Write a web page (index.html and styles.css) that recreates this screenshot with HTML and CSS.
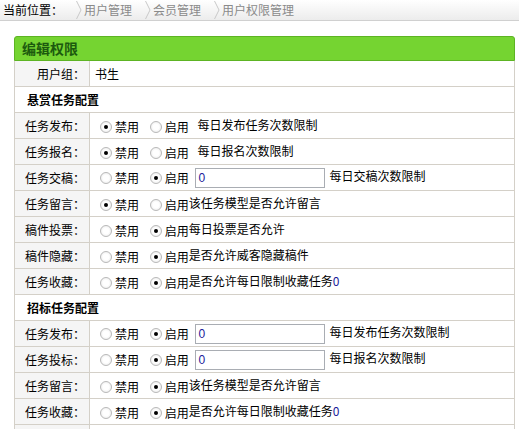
FILE: index.html
```html
<!DOCTYPE html>
<html lang="zh-CN">
<head>
    <meta charset="UTF-8">
    <title>编辑权限</title>
    <link rel="stylesheet" href="styles.css">
</head>
<body>

    <div class="crumbs">
        <span class="crumb-title">当前位置：</span>
        <span class="sep"><svg width="6" height="20" viewBox="0 0 6 20"><polyline points="0.5,1 5,10 0.5,19" fill="none" stroke="#c8c8c8" stroke-width="1"/></svg></span>
        <span class="crumb">用户管理</span>
        <span class="sep"><svg width="6" height="20" viewBox="0 0 6 20"><polyline points="0.5,1 5,10 0.5,19" fill="none" stroke="#c8c8c8" stroke-width="1"/></svg></span>
        <span class="crumb">会员管理</span>
        <span class="sep"><svg width="6" height="20" viewBox="0 0 6 20"><polyline points="0.5,1 5,10 0.5,19" fill="none" stroke="#c8c8c8" stroke-width="1"/></svg></span>
        <span class="crumb">用户权限管理</span>
    </div>

    <div class="panel">
        <div class="panel-head">编辑权限</div>
        <table class="form-table">
            <tr>
                <th>用户组：</th>
                <td>书生</td>
            </tr>
            <tr class="section">
                <td colspan="2">悬赏任务配置</td>
            </tr>
            <tr>
                <th>任务发布：</th>
                <td>
                    <label><input type="radio" name="r1" checked>禁用</label>
                    <label><input type="radio" name="r1">启用</label>
                    <span class="tip">每日发布任务次数限制</span>
                </td>
            </tr>
            <tr>
                <th>任务报名：</th>
                <td>
                    <label><input type="radio" name="r2" checked>禁用</label>
                    <label><input type="radio" name="r2">启用</label>
                    <span class="tip">每日报名次数限制</span>
                </td>
            </tr>
            <tr>
                <th>任务交稿：</th>
                <td>
                    <label><input type="radio" name="r3">禁用</label>
                    <label><input type="radio" name="r3" checked>启用</label>
                    <input type="text" class="txt" value="0">每日交稿次数限制
                </td>
            </tr>
            <tr>
                <th>任务留言：</th>
                <td>
                    <label><input type="radio" name="r4" checked>禁用</label>
                    <label class="tight"><input type="radio" name="r4">启用</label>该任务模型是否允许留言
                </td>
            </tr>
            <tr>
                <th>稿件投票：</th>
                <td>
                    <label><input type="radio" name="r5">禁用</label>
                    <label class="tight"><input type="radio" name="r5" checked>启用</label>每日投票是否允许
                </td>
            </tr>
            <tr>
                <th>稿件隐藏：</th>
                <td>
                    <label><input type="radio" name="r6">禁用</label>
                    <label class="tight"><input type="radio" name="r6" checked>启用</label>是否允许威客隐藏稿件
                </td>
            </tr>
            <tr>
                <th>任务收藏：</th>
                <td>
                    <label><input type="radio" name="r7">禁用</label>
                    <label class="tight"><input type="radio" name="r7" checked>启用</label>是否允许每日限制收藏任务<span class="num">0</span>
                </td>
            </tr>
            <tr class="section">
                <td colspan="2">招标任务配置</td>
            </tr>
            <tr>
                <th>任务发布：</th>
                <td>
                    <label><input type="radio" name="z1">禁用</label>
                    <label><input type="radio" name="z1" checked>启用</label>
                    <input type="text" class="txt" value="0">每日发布任务次数限制
                </td>
            </tr>
            <tr>
                <th>任务投标：</th>
                <td>
                    <label><input type="radio" name="z2">禁用</label>
                    <label><input type="radio" name="z2" checked>启用</label>
                    <input type="text" class="txt" value="0">每日报名次数限制
                </td>
            </tr>
            <tr>
                <th>任务留言：</th>
                <td>
                    <label><input type="radio" name="z3">禁用</label>
                    <label class="tight"><input type="radio" name="z3" checked>启用</label>该任务模型是否允许留言
                </td>
            </tr>
            <tr>
                <th>任务收藏：</th>
                <td>
                    <label><input type="radio" name="z4">禁用</label>
                    <label class="tight"><input type="radio" name="z4" checked>启用</label>是否允许每日限制收藏任务<span class="num">0</span>
                </td>
            </tr>
            <tr>
                <th></th>
                <td></td>
            </tr>
        </table>
    </div>

</body>
</html>
```

FILE: styles.css
```css
body {
    margin: 0;
    font-family: "Noto Sans CJK SC", "Liberation Sans", sans-serif;
    font-size: 12px;
    color: #000;
    background: #fff;
}
.crumbs {
    height: 20px;
    line-height: 20px;
    padding-left: 3px;
    background: linear-gradient(#ffffff, #ececec);
    border-bottom: 1px solid #d0d0d0;
    display: flex;
    align-items: center;
    white-space: nowrap;
}
.crumb-title {
    color: #000;
    width: 73px;
}
.sep {
    display: flex;
    width: 8px;
    height: 20px;
}
.crumb {
    color: #8a8a8a;
    padding: 0 13px 0 0;
}
.panel {
    margin: 15px 4px 0 14px;
}
.panel-head {
    height: 23px;
    line-height: 23px;
    padding-left: 7px;
    background: #75d431;
    border: 1px solid #5db423;
    border-radius: 3px 3px 0 0;
    color: #1c5a0e;
    font-size: 14px;
    font-weight: bold;
}
.form-table {
    width: 100%;
    border-collapse: collapse;
    border-left: 1px solid #d4d0c8;
    border-right: 1px solid #d4d0c8;
}
.form-table th,
.form-table td {
    height: 25px;
    padding: 0;
    border-bottom: 1px solid #d4d0c8;
    white-space: nowrap;
}
.form-table th {
    width: 70px;
    padding-right: 4px;
    text-align: right;
    font-weight: normal;
    background: #f5f5f5;
    border-right: 1px solid #d4d0c8;
}
.form-table td {
    padding-left: 10px;
}
.form-table tr:first-child td {
    padding-left: 5px;
}
.form-table tr.section td {
    padding-left: 12px;
    font-weight: bold;
}
label {
    display: inline-flex;
    align-items: center;
    margin-right: 8px;
    vertical-align: middle;
}
label.tight {
    margin-right: 0;
}
input[type="radio"] {
    appearance: none;
    width: 12px;
    height: 12px;
    margin: 0 3px 0 0;
    border: 1px solid #b9b9b9;
    border-radius: 50%;
    background: radial-gradient(#ffffff 40%, #e4e4e4);
    position: relative;
}
input[type="radio"]:checked::after {
    content: "";
    position: absolute;
    left: 3px;
    top: 3px;
    width: 4px;
    height: 4px;
    border-radius: 50%;
    background: #000;
}
.tip {
    margin-left: -2px;
}
.txt {
    width: 124px;
    height: 16px;
    padding: 1px 2px;
    margin: 0 4px 0 -4px;
    border: 1px solid #a9adb3;
    font-family: "Liberation Sans", sans-serif;
    font-size: 12px;
    color: #1a1a9a;
    vertical-align: middle;
}
.num {
    color: #1a1a9a;
}
```
